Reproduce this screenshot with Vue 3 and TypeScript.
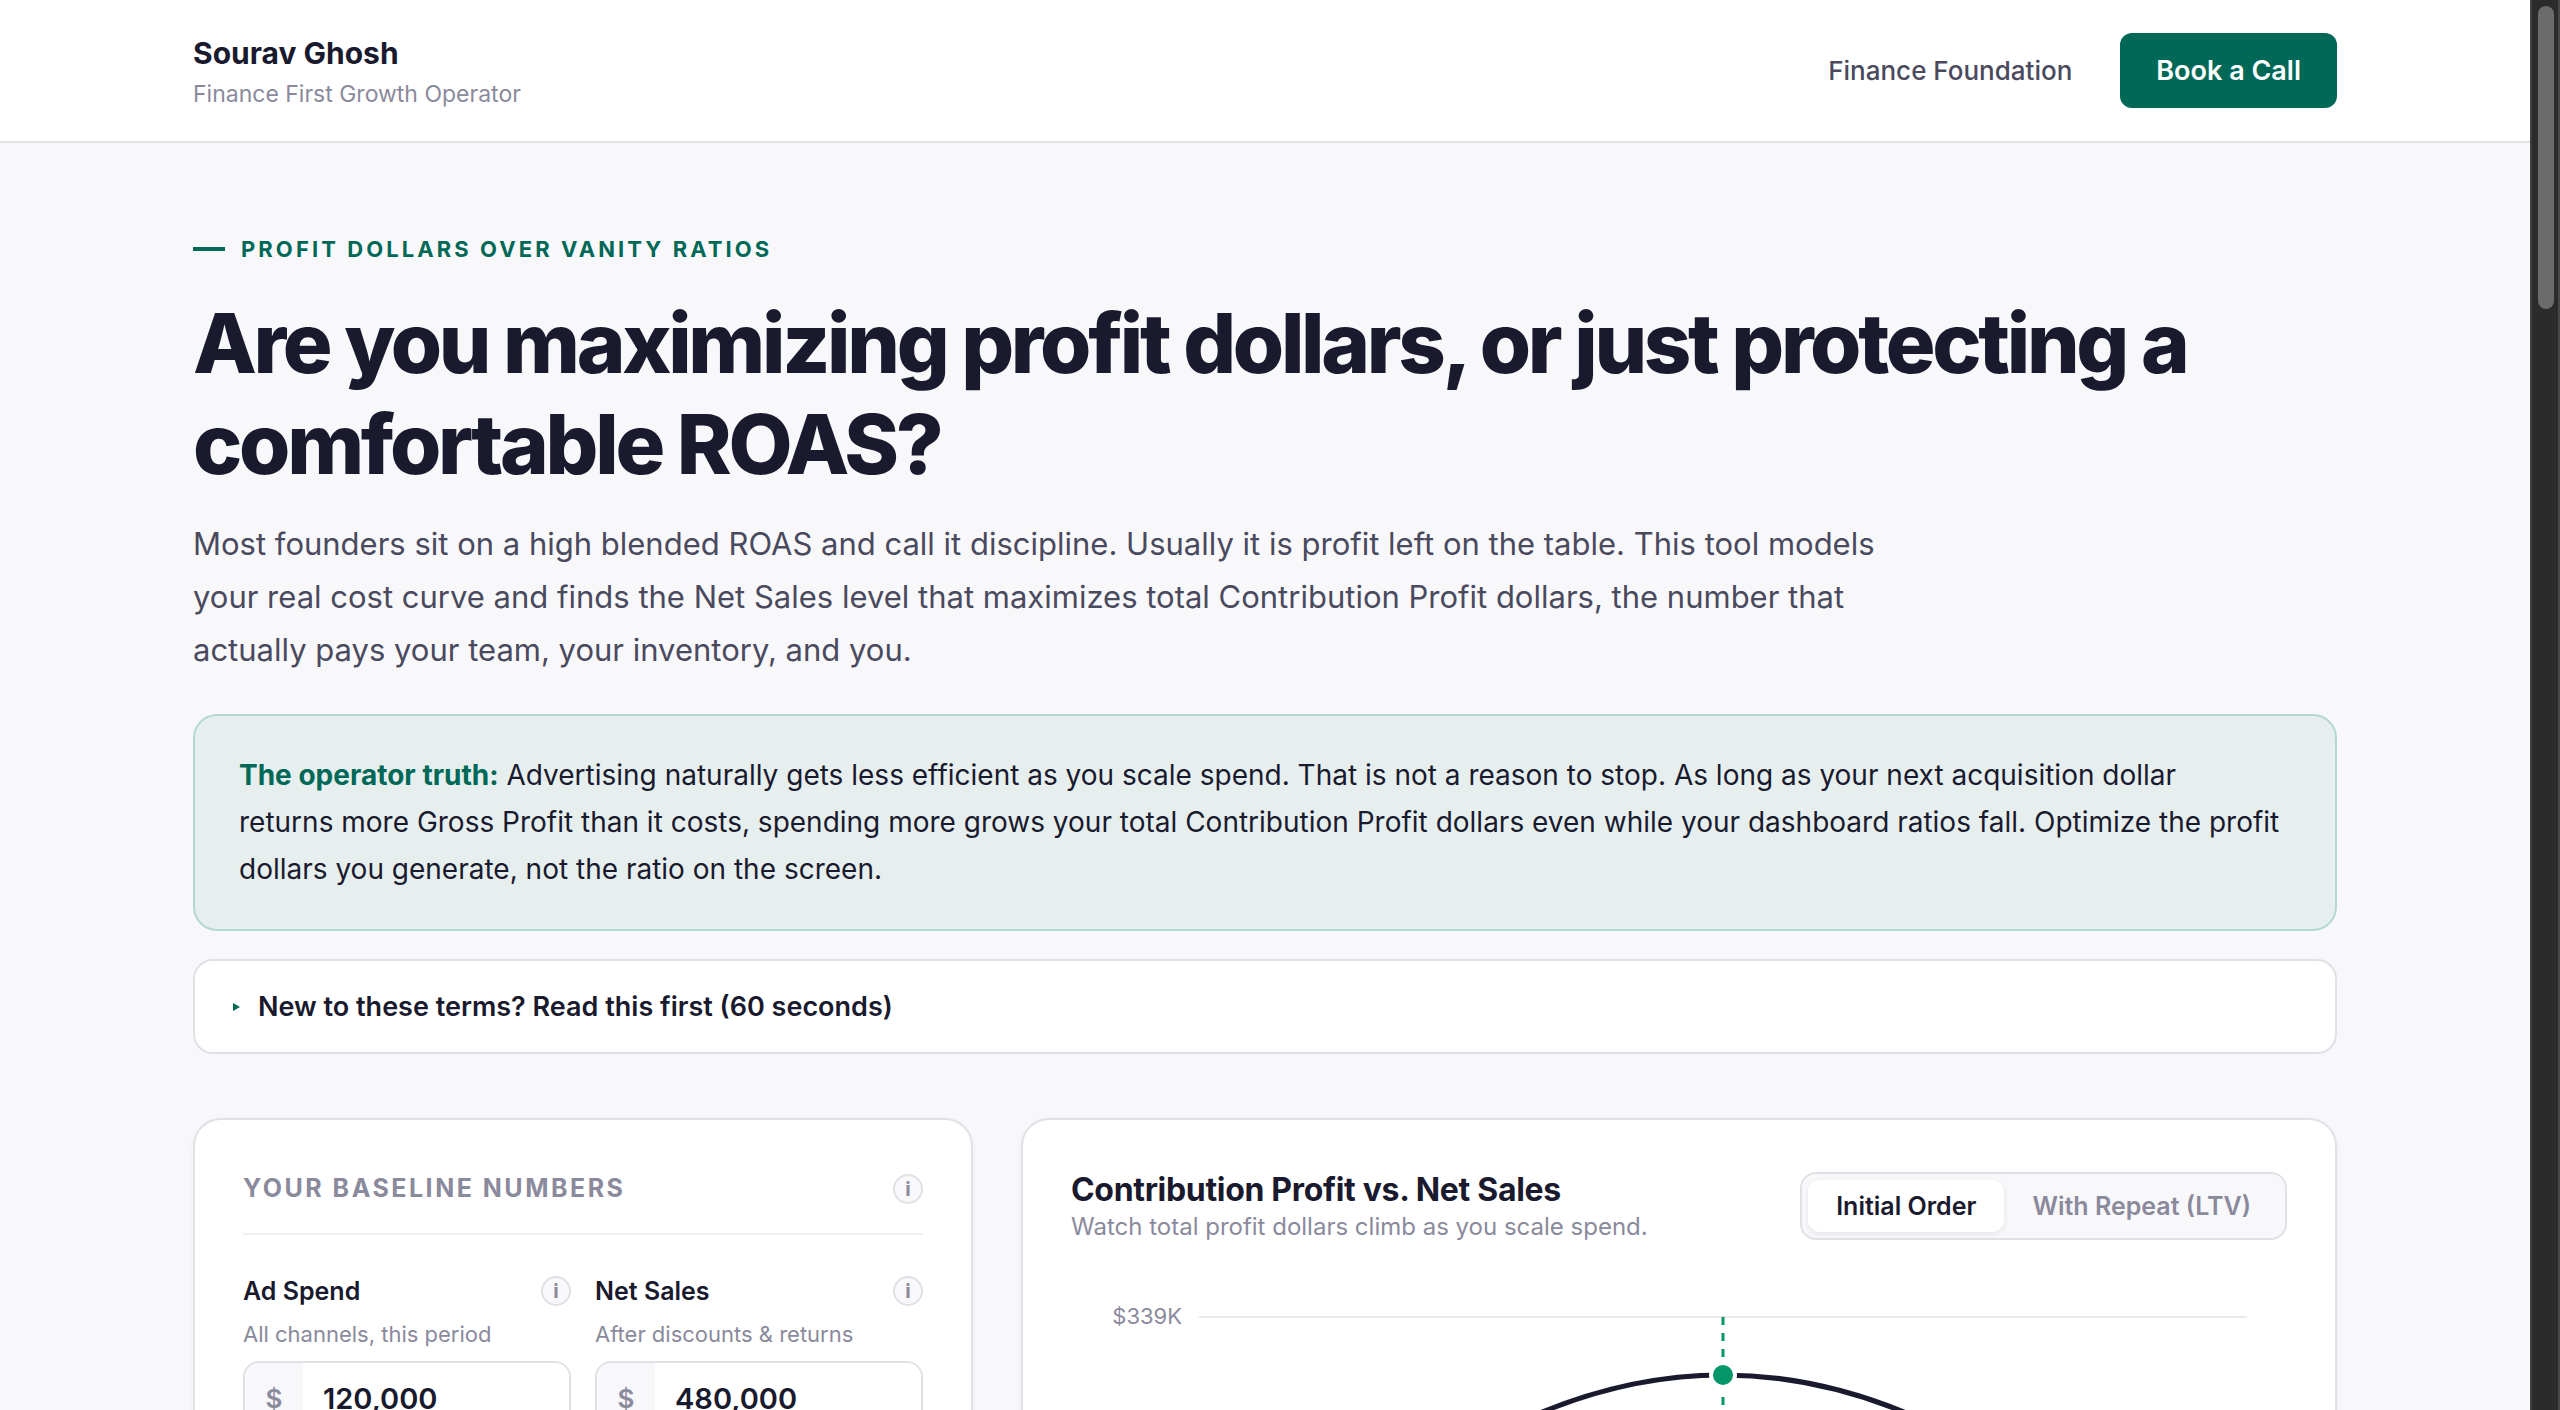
<script setup lang="ts">
import { ref } from 'vue'

interface Field {
  id: string
  label: string
  hint: string
  value: string
}

const fields = ref<Field[]>([
  { id: 'ad-spend', label: 'Ad Spend', hint: 'All channels, this period', value: '120,000' },
  { id: 'net-sales', label: 'Net Sales', hint: 'After discounts & returns', value: '480,000' },
])

const modes = ['Initial Order', 'With Repeat (LTV)']
const mode = ref(modes[0])
</script>

<template>
  <div class="window">
    <div class="page">
      <header class="site-header">
        <div class="container header-row">
          <div class="brand">
            <div class="name">Sourav Ghosh</div>
            <div class="tagline">Finance First Growth Operator</div>
          </div>
          <nav class="nav">
            <a href="#foundation" class="nav-link">Finance Foundation</a>
            <a href="#book" class="nav-button">Book a Call</a>
          </nav>
        </div>
      </header>

      <main class="container main">
        <div class="eyebrow">Profit dollars over vanity ratios</div>
        <h1>Are you maximizing profit dollars, or just protecting a comfortable ROAS?</h1>
        <p class="lead">
          Most founders sit on a high blended ROAS and call it discipline. Usually it is profit left
          on the table. This tool models your real cost curve and finds the Net Sales level that
          maximizes total Contribution Profit dollars, the number that actually pays your team, your
          inventory, and you.
        </p>

        <div class="truth">
          <strong>The operator truth:</strong> Advertising naturally gets less efficient as you
          scale spend. That is not a reason to stop. As long as your next acquisition dollar<br />
          returns more Gross Profit than it costs, spending more grows your total Contribution Profit
          dollars even while your dashboard ratios fall. Optimize the profit dollars you generate,
          not the ratio on the screen.
        </div>

        <details class="terms">
          <summary>
            <svg class="marker" viewBox="0 0 7 8" aria-hidden="true"><path d="M0 0L7 4L0 8Z" /></svg>
            New to these terms? Read this first (60 seconds)
          </summary>
        </details>

        <div class="columns">
          <section class="card">
            <div class="card-head">
              <h2>Your baseline numbers</h2>
              <button type="button" class="info" aria-label="About your baseline numbers">i</button>
            </div>
            <div class="fields">
              <div v-for="field in fields" :key="field.id" class="field">
                <div class="field-head">
                  <label :for="field.id">{{ field.label }}</label>
                  <button type="button" class="info" :aria-label="'About ' + field.label">i</button>
                </div>
                <div class="hint">{{ field.hint }}</div>
                <div class="money">
                  <span class="prefix">$</span>
                  <input :id="field.id" v-model="field.value" type="text" inputmode="numeric" />
                </div>
              </div>
            </div>
          </section>

          <section class="card chart-card">
            <div class="chart-head">
              <div>
                <h2 class="chart-title">Contribution Profit vs. Net Sales</h2>
                <div class="chart-sub">Watch total profit dollars climb as you scale spend.</div>
              </div>
              <div class="segments">
                <button
                  v-for="m in modes"
                  :key="m"
                  type="button"
                  class="segment"
                  :class="{ active: m === mode }"
                  @click="mode = m"
                >
                  {{ m }}
                </button>
              </div>
            </div>
            <svg class="chart" viewBox="0 0 1216 560" role="img" aria-label="Contribution profit curve">
              <text class="tick" x="111" y="46" text-anchor="end">$339K</text>
              <line x1="128" y1="39" x2="1176" y2="39" stroke="#e8e8ee" stroke-width="2" />
              <line x1="652" y1="39" x2="652" y2="520" stroke="#059669" stroke-width="3" stroke-dasharray="8 8" />
              <path d="M288 247Q652 -53 1016 247" fill="none" stroke="#1a1a2e" stroke-width="5" />
              <circle cx="652" cy="97" r="12" fill="#059669" stroke="#fff" stroke-width="4" />
            </svg>
          </section>
        </div>
      </main>
    </div>

    <div class="scrollbar" aria-hidden="true"><div class="thumb"></div></div>
  </div>
</template>

<style>
html,
body {
  margin: 0;
  height: 100%;
  overflow: hidden;
}

#app {
  height: 100%;
}
</style>

<style scoped>
* {
  box-sizing: border-box;
}

.window {
  display: flex;
  height: 100vh;
  overflow: hidden;
  background: #f8f8fb;
  color: #1a1a2e;
  font-family: Inter, 'Liberation Sans', sans-serif;
}

.page {
  flex: 1;
  min-width: 0;
  overflow: hidden;
}

.scrollbar {
  flex: none;
  width: 30px;
  padding: 6px 4px 0 6px;
  background: #2b2b2b;
  border-left: 2px solid #3e4141;
  border-right: 2px solid #484846;
}

.thumb {
  height: 303px;
  border-radius: 8px;
  background: #6b6b6b;
}

.container {
  max-width: 2240px;
  margin: 0 auto;
  padding: 0 48px;
}

.site-header {
  background: #fff;
  border-bottom: 2px solid #e0e0e6;
}

.header-row {
  display: flex;
  align-items: center;
  justify-content: space-between;
  height: 141px;
}

.brand {
  padding-top: 4px;
}

.name {
  font-size: 30px;
  line-height: 42px;
  font-weight: 700;
}

.tagline {
  font-size: 23px;
  line-height: 40px;
  color: #8a8a9c;
}

.nav {
  display: flex;
  align-items: center;
  gap: 48px;
  font-size: 26px;
}

.nav-link {
  color: #4a4a5e;
  font-weight: 500;
  text-decoration: none;
}

.nav-button {
  padding: 0 36px;
  border-radius: 12px;
  background: #006856;
  color: #fff;
  font-size: 27px;
  font-weight: 600;
  line-height: 75px;
  text-decoration: none;
}

.main {
  padding-top: 88px;
}

.eyebrow {
  display: flex;
  align-items: center;
  gap: 16px;
  color: #006856;
  font-size: 22px;
  font-weight: 700;
  line-height: 36px;
  letter-spacing: 0.14em;
  text-transform: uppercase;
}

.eyebrow::before {
  content: '';
  width: 32px;
  height: 4px;
  background: #006856;
}

h1 {
  margin: 26px 0 22px;
  font-size: 83px;
  line-height: 101px;
  font-weight: 800;
  letter-spacing: -0.04em;
}

.lead {
  max-width: 1720px;
  margin: 0 0 38px;
  color: #4a4a5e;
  font-size: 31px;
  line-height: 53px;
}

.truth {
  padding: 36px 44px;
  border: 2px solid #b3d9cf;
  border-radius: 24px;
  background: #e6efee;
  font-size: 28px;
  line-height: 47px;
}

.truth strong {
  color: #006856;
  font-weight: 700;
}

.terms {
  margin-top: 28px;
  border: 2px solid #e0e0e6;
  border-radius: 20px;
  background: #fff;
}

summary {
  display: flex;
  align-items: center;
  gap: 18px;
  padding: 0 38px;
  font-size: 27px;
  font-weight: 600;
  line-height: 91px;
  list-style: none;
}

.marker {
  width: 7px;
  height: 8px;
  fill: #006856;
}

.columns {
  display: grid;
  grid-template-columns: 780px minmax(0, 1fr);
  gap: 48px;
  margin-top: 64px;
}

.card {
  padding: 48px;
  border: 2px solid #e0e0e6;
  border-radius: 28px;
  background: #fff;
  box-shadow: 0 2px 6px rgba(26, 26, 46, 0.04);
}

.card-head {
  display: flex;
  align-items: center;
  justify-content: space-between;
  padding-bottom: 24px;
  border-bottom: 2px solid #f0f0f4;
}

.card-head h2 {
  margin: 0;
  color: #8a8a9c;
  font-size: 25px;
  line-height: 41px;
  font-weight: 700;
  letter-spacing: 0.1em;
  text-transform: uppercase;
}

.info {
  flex: none;
  width: 30px;
  height: 30px;
  padding: 0;
  border: 2px solid #e0e0e6;
  border-radius: 50%;
  background: #f8f8fb;
  color: #8a8a9c;
  font: 700 20px/26px Inter, sans-serif;
}

.fields {
  display: grid;
  grid-template-columns: repeat(2, minmax(0, 1fr));
  gap: 24px;
  margin-top: 36px;
}

.field-head {
  display: flex;
  align-items: center;
  justify-content: space-between;
  height: 40px;
  font-size: 25px;
  font-weight: 600;
}

.hint {
  margin: 6px 0 10px;
  color: #8a8a9c;
  font-size: 22px;
  line-height: 34px;
}

.money {
  display: flex;
  height: 76px;
  overflow: hidden;
  border: 2px solid #e0e0e6;
  border-radius: 16px;
}

.prefix {
  flex: none;
  width: 58px;
  background: #f8f8fb;
  color: #8a8a9c;
  font-size: 26px;
  font-weight: 600;
  line-height: 72px;
  text-align: center;
}

.money input {
  flex: 1;
  min-width: 0;
  padding: 0 20px;
  border: 0;
  outline: 0;
  background: #fff;
  color: #1a1a2e;
  font: 600 29px/72px Inter, sans-serif;
}

.chart-head {
  display: flex;
  align-items: flex-start;
  justify-content: space-between;
  padding-top: 4px;
}

.chart-title {
  margin: 0;
  font-size: 32px;
  line-height: 36px;
  font-weight: 700;
  letter-spacing: -0.01em;
}

.chart-sub {
  color: #8a8a9c;
  font-size: 24px;
  line-height: 38px;
}

.segments {
  display: flex;
  padding: 6px;
  border: 2px solid #e0e0e6;
  border-radius: 16px;
  background: #f8f8fb;
}

.segment {
  padding: 0 28px;
  border: 0;
  border-radius: 12px;
  background: none;
  color: #8a8a9c;
  font: 600 25px/52px Inter, sans-serif;
}

.segment.active {
  background: #fff;
  color: #1a1a2e;
  box-shadow: 0 2px 6px rgba(0, 0, 0, 0.08);
}

.chart {
  display: block;
  width: 100%;
  margin-top: 32px;
}

.tick {
  fill: #8a8a9c;
  font-size: 22px;
}
</style>
